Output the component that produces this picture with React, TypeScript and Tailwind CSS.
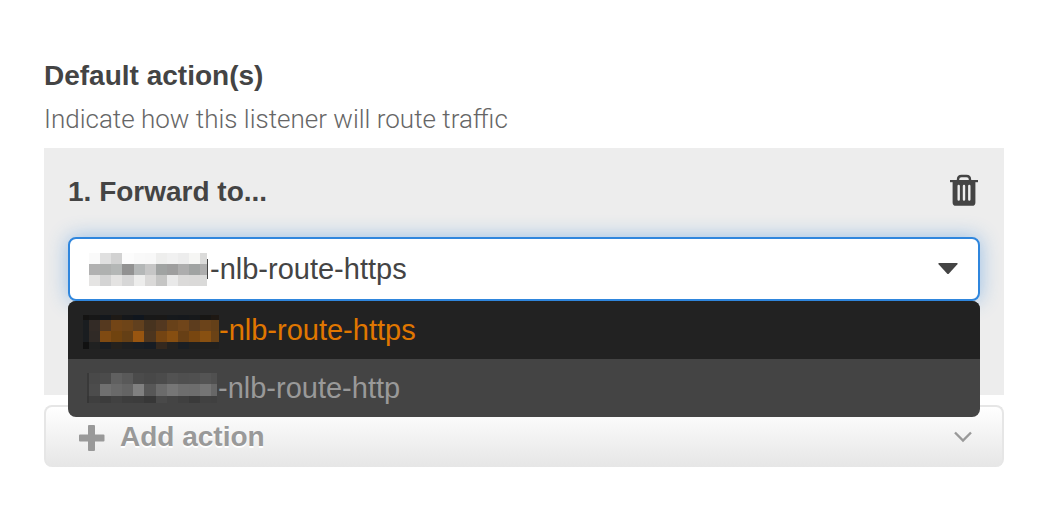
import { useState } from 'react'

interface MosaicProps {
  columns: number[]
  rows: number[]
  colors: string[][]
  className?: string
}

// Pixelated block that hides the prefix of a target group name
function Mosaic({ columns, rows, colors, className }: MosaicProps) {
  return (
    <svg
      aria-hidden="true"
      width={columns[columns.length - 1]}
      height={rows[rows.length - 1]}
      shapeRendering="crispEdges"
      className={className}
    >
      {colors.map((line, y) =>
        line.map((color, x) => (
          <rect
            key={`${x}-${y}`}
            x={columns[x]}
            y={rows[y]}
            width={columns[x + 1] - columns[x]}
            height={rows[y + 1] - rows[y]}
            fill={color}
          />
        ))
      )}
    </svg>
  )
}

const fieldMosaic: MosaicProps = {
  columns: [0, 11, 22, 33, 45, 56, 67, 78, 89, 100, 111, 118],
  rows: [0, 11, 22, 33],
  colors: [
    ['#fafafa', '#e0e0e0', '#d2d2d2', '#fcfcfc', '#f9f9f9', '#f8f8f8', '#eeeeed', '#f1f1f1', '#ededed', '#f6f6f4', '#dbdbda'],
    ['#b1b1b1', '#afb1b0', '#b4b7b6', '#929292', '#b4b7b7', '#c6c6c6', '#a0a3a2', '#9e9e9e', '#adadad', '#a0a3a2', '#adadad'],
    ['#e5e4e3', '#d4d4d4', '#e4e3e2', '#d7d7d7', '#ededec', '#dad9d8', '#c5c5c4', '#e9e9e9', '#dbdad9', '#dad9d8', '#dadad9'],
  ],
}

const orangeMosaic: MosaicProps = {
  columns: [0, 6, 17, 28, 39, 50, 61, 73, 84, 95, 106, 117, 128, 136],
  rows: [0, 5, 16, 27, 34],
  colors: [
    ['#141312', '#171717', '#13171c', '#1e1a16', '#15171a', '#10161e', '#181818', '#191817', '#16191c', '#15181c', '#17191b', '#171614', '#1e1813'],
    ['#1a1d20', '#332b26', '#55391f', '#734516', '#6e4418', '#61401e', '#47331f', '#533820', '#684119', '#70451a', '#5d3d1e', '#6b431a', '#644019'],
    ['#1a1d20', '#302a26', '#7f4a12', '#70430f', '#643f15', '#985510', '#4d351e', '#744412', '#864e11', '#673f15', '#784610', '#885011', '#6a4216'],
    ['#111111', '#202121', '#1a1d21', '#24211d', '#1e1f20', '#1a1e23', '#171c23', '#34281e', '#242220', '#1a1e23', '#20201f', '#20201f', '#20201f'],
  ],
}

const greyMosaic: MosaicProps = {
  columns: [0, 2, 13, 24, 35, 46, 57, 69, 80, 91, 102, 113, 124, 130],
  rows: [0, 11, 23, 30],
  colors: [
    ['#393939', '#494949', '#4b4b4b', '#606060', '#595959', '#4b4b4b', '#484848', '#4b4b4b', '#525252', '#4f4f4f', '#505050', '#545454', '#505050'],
    ['#393939', '#4c4c4c', '#707070', '#696969', '#646464', '#808080', '#575757', '#6b6b6b', '#767676', '#6e6e6e', '#6d6d6d', '#757575', '#676767'],
    ['#363636', '#3f3f3f', '#3c3c3c', '#414141', '#3d3d3d', '#3c3c3c', '#373737', '#494949', '#444444', '#404040', '#3a3a3a', '#414141', '#404040'],
  ],
}

const targetGroups = ['-nlb-route-https', '-nlb-route-http']

function TrashIcon() {
  return (
    <svg aria-hidden="true" width="28" height="32" viewBox="0 0 28 32">
      <path
        d="M8 7V5.500Q8 2 11.500 2h5Q20 2 20 5.500V7"
        fill="none"
        stroke="#444444"
        strokeWidth="2.400"
      />
      <path d="M0 6h28v2.200H0z" fill="#444444" />
      <path
        fillRule="evenodd"
        d="M2.600 8h22.800v20.400q0 3.400-3.400 3.400H6q-3.400 0-3.400-3.400zM8.700 10.700q-1.200 0-1.200 1.200v13.600q0 1.200 1.200 1.200t1.200-1.200V11.900q0-1.200-1.200-1.200zm5.300 0q-1.200 0-1.200 1.200v13.600q0 1.200 1.200 1.200t1.200-1.200V11.900q0-1.200-1.200-1.200zm5.300 0q-1.200 0-1.200 1.200v13.600q0 1.200 1.200 1.200t1.200-1.200V11.900q0-1.200-1.200-1.200z"
        fill="#444444"
      />
    </svg>
  )
}

function TargetGroupSelect() {
  const [selected, setSelected] = useState(targetGroups[0])

  return (
    <div className="relative">
      <select
        id="target-group"
        value={selected}
        onChange={event => setSelected(event.target.value)}
        className="block h-16 w-full appearance-none rounded-lg border-2 border-[#2f86dd] bg-white pt-0.5 pl-[140px] pr-16 text-[29px] text-[#444444] shadow-[0_0_20px_rgba(47,134,221,0.45)] outline-none"
      >
        {targetGroups.map(group => (
          <option key={group} value={group}>
            {group}
          </option>
        ))}
      </select>
      <div className="pointer-events-none absolute top-4 left-5 flex items-start pl-px">
        <Mosaic {...fieldMosaic} />
        <span className="mt-1.5 h-5 w-px bg-[#444444]" />
      </div>
      <svg
        aria-hidden="true"
        width="20"
        height="12"
        className="pointer-events-none absolute top-[26px] right-[22px]"
      >
        <path
          d="M1.200 0h17.600q1.600 0 .6 1.200L11 10.500q-1 1-2 0L.6 1.200Q-.4 0 1.200 0z"
          fill="#444444"
        />
      </svg>

      <ul
        role="listbox"
        aria-label="Target groups"
        className="absolute top-full right-0 left-0 z-10 overflow-hidden rounded-lg bg-[#444444] text-[29px]"
      >
        <li
          role="option"
          aria-selected="true"
          className="flex h-[58px] items-center bg-[#222222] pl-[15px] text-[#e07700]"
        >
          <Mosaic {...orangeMosaic} className="mt-1" />
          <span className="pt-0.5">{targetGroups[0]}</span>
        </li>
        <li
          role="option"
          aria-selected="false"
          className="flex h-[58px] items-center pl-[19px] text-[#999999]"
        >
          <Mosaic {...greyMosaic} className="mr-px" />
          <span className="pt-0.5">{targetGroups[1]}</span>
        </li>
      </ul>
    </div>
  )
}

export default function App() {
  return (
    <main className="min-h-screen bg-white pt-[58px] pr-10 pb-12 pl-11 font-['Liberation_Sans',Arial,sans-serif] text-[#444444]">
      <h2 className="text-[28px] leading-9 font-bold">Default action(s)</h2>
      <p className="mt-1.5 mb-2.5 font-[Roboto,'Liberation_Sans',sans-serif] text-[26px] leading-[38px] font-light text-[#666666]">
        Indicate how this listener will route traffic
      </p>

      <section className="bg-[#ededed] px-6 pt-6 pb-[94px]">
        <div className="mb-[25px] flex items-start justify-between">
          <label
            htmlFor="target-group"
            className="text-[28px] leading-10 font-bold"
          >
            1. Forward to...
          </label>
          <button
            type="button"
            aria-label="Delete action"
            className="mt-0.5 mr-0.5"
          >
            <TrashIcon />
          </button>
        </div>
        <TargetGroupSelect />
      </section>

      <button
        type="button"
        className="mt-2.5 flex h-[62px] w-full items-center rounded-lg border-2 border-b-0 border-[#e6e6e6] bg-linear-to-b from-white to-[#e6e6e6] pr-[30px] pl-[33px] text-[28px] font-bold text-[#999999]"
      >
        <svg aria-hidden="true" width="26" height="26" className="mt-0.5">
          <path
            d="M10 0h5q1 0 1 1v8.500h8.500q1 0 1 1v5q0 1-1 1H16V25q0 1-1 1h-5q-1 0-1-1v-8.500H1q-1 0-1-1v-5q0-1 1-1h8V1q0-1 1-1z"
            fill="#999999"
          />
        </svg>
        <span className="ml-[15px] text-shadow-[0_2px_0_#ffffff]">
          Add action
        </span>
        <svg aria-hidden="true" width="18" height="12" className="ml-auto">
          <path
            d="M1 1.500l8 8 8-8"
            fill="none"
            stroke="#999999"
            strokeWidth="2.400"
          />
        </svg>
      </button>
    </main>
  )
}
